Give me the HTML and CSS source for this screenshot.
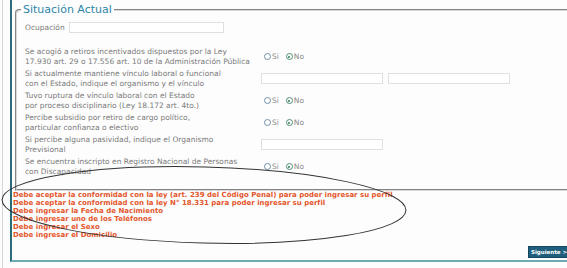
FILE: index.html
```html
<!DOCTYPE html>
<html lang="es">
<head>
  <meta charset="UTF-8" />
  <title>Situación Actual</title>
  <link rel="stylesheet" href="styles.css">
</head>
<body>
  <div class="page">
    <div class="panel">

      <fieldset class="box">
        <legend>Situación Actual</legend>

        <div class="inline-row">
          <label for="ocupacion">Ocupación</label>
          <input type="text" id="ocupacion" class="txt txt-long" />
        </div>

        <div class="rows">
          <div class="row">
            <div class="q">Se acogió a retiros incentivados dispuestos por la Ley<br />17.930 art. 29 o 17.556 art. 10 de la Administración Pública</div>
            <div class="a">
              <label class="opt"><input type="radio" name="r1" /> Si</label>
              <label class="opt"><input type="radio" name="r1" checked /> No</label>
            </div>
          </div>

          <div class="row">
            <div class="q">Si actualmente mantiene vínculo laboral o funcional<br />con el Estado, indique el organismo y el vínculo</div>
            <div class="a">
              <input type="text" class="txt" />
              <input type="text" class="txt" />
            </div>
          </div>

          <div class="row">
            <div class="q">Tuvo ruptura de vínculo laboral con el Estado<br />por proceso disciplinario (Ley 18.172 art. 4to.)</div>
            <div class="a">
              <label class="opt"><input type="radio" name="r2" /> Si</label>
              <label class="opt"><input type="radio" name="r2" checked /> No</label>
            </div>
          </div>

          <div class="row">
            <div class="q">Percibe subsidio por retiro de cargo político,<br />particular confianza o electivo</div>
            <div class="a">
              <label class="opt"><input type="radio" name="r3" /> Si</label>
              <label class="opt"><input type="radio" name="r3" checked /> No</label>
            </div>
          </div>

          <div class="row">
            <div class="q">Si percibe alguna pasividad, indique el Organismo<br />Previsional</div>
            <div class="a">
              <input type="text" class="txt" />
            </div>
          </div>

          <div class="row">
            <div class="q">Se encuentra inscripto en Registro Nacional de Personas<br />con Discapacidad</div>
            <div class="a">
              <label class="opt"><input type="radio" name="r4" /> Si</label>
              <label class="opt"><input type="radio" name="r4" checked /> No</label>
            </div>
          </div>
        </div>
      </fieldset>

      <ul class="errors">
        <li>Debe aceptar la conformidad con la ley (art. 239 del Código Penal) para poder ingresar su perfil</li>
        <li>Debe aceptar la conformidad con la ley N° 18.331 para poder ingresar su perfil</li>
        <li>Debe ingresar la Fecha de Nacimiento</li>
        <li>Debe ingresar uno de los Teléfonos</li>
        <li>Debe ingresar el Sexo</li>
        <li>Debe ingresar el Domicilio</li>
      </ul>

      <div class="actions">
        <button type="button" class="next">Siguiente &gt;</button>
      </div>
    </div>
  </div>

  <!-- hand drawn circle around the error list -->
  <svg class="mark" width="567" height="268" viewBox="0 0 567 268">
    <ellipse cx="204" cy="205" rx="202" ry="38" transform="rotate(1.5 204 205)" fill="none" stroke="#333" stroke-width="1" />
  </svg>
</body>
</html>
```

FILE: styles.css
```css
html, body {
  margin: 0;
  overflow: hidden;
}

body {
  background: #fdfdfd;
  font-family: "DejaVu Sans", Verdana, sans-serif;
  color: #7a7a7a;
  position: relative;
}

.page {
  margin-left: 2px;
  border-left: 1px solid #d4d4d4;
  height: 268px;
}

.panel {
  margin-left: 7px;
  width: 640px;
  height: 257px;
  padding: 3px 0 0 1px;
  border-left: 2px solid #2c6b7c;
  border-bottom: 2px solid #6fa9b4;
  box-sizing: content-box;
}

/* fieldset */
.box {
  margin: 0 0 0 2px;
  padding: 6px 0 13px 8px;
  border: 2px groove #d8d8d8;
  border-radius: 4px 0 0 0;
  min-width: 0;
}

.box legend {
  margin-left: -4px;
  padding: 0 2px;
  font-size: 11px;
  line-height: 13px;
  color: #2e86a8;
}

.inline-row {
  display: flex;
  align-items: center;
  gap: 4px;
  font-size: 7.5px;
}

.txt {
  box-sizing: border-box;
  height: 11px;
  width: 122px;
  margin: 0;
  padding: 0;
  border: 1px solid #e0e0e0;
  background: #fff;
}

.txt-long {
  width: 155px;
}

.rows {
  margin-top: 14px;
  display: flex;
  flex-direction: column;
  gap: 3px;
}

.row {
  display: grid;
  grid-template-columns: 236px 1fr;
  align-items: center;
  font-size: 7.5px;
  line-height: 9.5px;
}

.a {
  display: flex;
  align-items: center;
  gap: 5px;
}

.opt {
  display: inline-flex;
  align-items: center;
  gap: 1px;
  margin-right: 2px;
  color: #8a8a8a;
}

.opt:first-child {
  margin-left: 3px;
}

.opt input {
  appearance: none;
  -webkit-appearance: none;
  width: 7px;
  height: 7px;
  margin: 0;
  border: 1px solid #6f8fa8;
  border-radius: 50%;
  background: #fff;
  box-sizing: border-box;
  position: relative;
}

.opt input:checked {
  border-color: #4c8f72;
}

.opt input:checked::after {
  content: "";
  position: absolute;
  left: 1.5px;
  top: 1.5px;
  width: 2px;
  height: 2px;
  border-radius: 50%;
  background: #2f7a55;
}

/* error list */
.errors {
  list-style: none;
  margin: 0;
  padding: 0;
  font-size: 7px;
  line-height: 8px;
  font-weight: bold;
  color: #e4562c;
}

.actions {
  display: flex;
  justify-content: flex-end;
  margin-top: 7px;
  padding-right: 75px;
}

.next {
  font-family: "DejaVu Sans", Verdana, sans-serif;
  font-size: 5.5px;
  font-weight: bold;
  color: #fff;
  background: #1f5f7d;
  border: 1px solid #16475e;
  padding: 1px 2px;
  height: 12px;
  width: 50px;
  text-align: left;
  line-height: 9px;
}

.mark {
  position: absolute;
  left: 0;
  top: 0;
  pointer-events: none;
}
```
